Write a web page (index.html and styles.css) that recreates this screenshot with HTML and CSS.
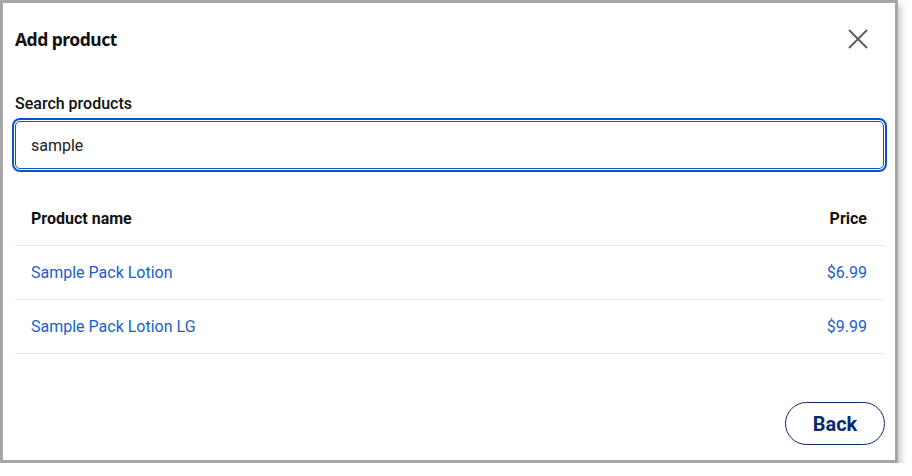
FILE: index.html
```html
<!DOCTYPE html>
<html>
<head>
<meta charset="utf-8">
<link rel="stylesheet" href="styles.css">
</head>
<body>
<div class="dialog">
  <div class="header">
    <h1 class="title">Add product</h1>
    <button class="close" aria-label="Close">
      <svg width="22" height="22" viewBox="0 0 22 22"><path d="M2 2 L20 20 M20 2 L2 20" stroke="#5a5a5a" stroke-width="1.8" fill="none"/></svg>
    </button>
  </div>
  <label class="label" for="search">Search products</label>
  <input id="search" class="search" type="text" value="sample">
  <table class="products">
    <thead>
      <tr><th class="name">Product name</th><th class="price">Price</th></tr>
    </thead>
    <tbody>
      <tr><td class="name"><a href="#">Sample Pack Lotion</a></td><td class="price"><a href="#">$6.99</a></td></tr>
      <tr><td class="name"><a href="#">Sample Pack Lotion LG</a></td><td class="price"><a href="#">$9.99</a></td></tr>
    </tbody>
  </table>
  <div class="footer">
    <button class="back">Back</button>
  </div>
</div>
</body>
</html>
```

FILE: styles.css
```css
html, body {
  margin: 0;
  padding: 0;
  background: #ffffff;
}
body {
  font-family: Roboto, "Liberation Sans", sans-serif;
  color: #1a1a1a;
}
.dialog {
  box-sizing: border-box;
  width: 898px;
  height: 463px;
  border: 3px solid #a6a6a6;
  background: #fff;
  box-shadow: 4px 4px 6px rgba(0, 0, 0, 0.18);
  padding: 0 11px 0 12px;
  display: flex;
  flex-direction: column;
}
.header {
  display: flex;
  align-items: center;
  justify-content: space-between;
  padding-top: 24px;
  height: 24px;
  box-sizing: content-box;
}
.title {
  margin: 0;
  font-family: "Noto Sans", sans-serif;
  font-weight: 700;
  font-size: 17.5px;
  letter-spacing: -0.5px;
  line-height: 24px;
  color: #111;
}
.close {
  border: 0;
  background: none;
  padding: 0;
  width: 22px;
  height: 22px;
  margin-right: 15px;
  cursor: pointer;
}
.label {
  margin-top: 43px;
  font-size: 16px;
  font-weight: 500;
  line-height: 20px;
  color: #111;
}
.search {
  box-sizing: border-box;
  margin-top: 7px;
  width: 100%;
  height: 48px;
  border: 1px solid #0a55c4;
  border-radius: 5px;
  outline: 2px solid #0a55c4;
  outline-offset: 1px;
  padding: 0 15px;
  font-family: Roboto, sans-serif;
  font-size: 16px;
  color: #222;
}
.products {
  margin-top: 23px;
  width: 100%;
  border-collapse: collapse;
  font-size: 16px;
}
.products th, .products td {
  height: 53px;
  padding: 0 16px 0 16px;
  border-bottom: 1px solid #e6e6e6;
}
.products th.price, .products td.price {
  padding-right: 17px;
}
.products th {
  font-weight: 700;
  color: #111;
}
.name { text-align: left; }
.price { text-align: right; }
.products a {
  color: #1a5fc8;
  text-decoration: none;
}
.footer {
  margin-top: auto;
  display: flex;
  justify-content: flex-end;
  padding-bottom: 15px;
}
.back {
  width: 100px;
  height: 43px;
  border: 1px solid #0b2a6e;
  border-radius: 22px;
  background: #fff;
  color: #0b2a6e;
  font-family: Roboto, sans-serif;
  font-weight: 700;
  font-size: 20px;
  margin-right: -1px;
  cursor: pointer;
}
```
